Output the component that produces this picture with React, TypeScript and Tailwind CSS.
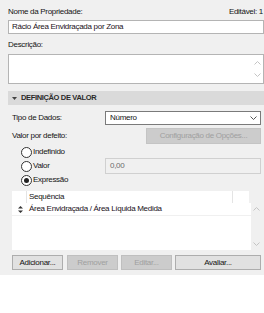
import React from "react";

function Radio({ checked }: { checked?: boolean }) {
  return (
    <div className="w-[11px] h-[11px] rounded-full border border-[#333333] bg-white flex items-center justify-center shrink-0">
      {checked && <div className="w-[5px] h-[5px] rounded-full bg-[#222222]" />}
    </div>
  );
}

function Chevron({ up, color = "#a8a8a8" }: { up?: boolean; color?: string }) {
  return (
    <svg width="7" height="4" viewBox="0 0 7 4">
      <path d={up ? "M0.5 3.5 L3.5 0.5 L6.5 3.5" : "M0.5 0.5 L3.5 3.5 L6.5 0.5"} fill="none" stroke={color} strokeWidth="1" />
    </svg>
  );
}

export default function App() {
  return (
    <div className="w-[264px] h-[313px] bg-white font-['Liberation_Sans',Arial,sans-serif] text-[8px] tracking-[-0.3px] text-[#141414] overflow-hidden">
      <div className="bg-[#f0f0f0] h-[275px] pl-2 pt-[6px] flex flex-col">
        <div className="h-[12px] flex items-center justify-between">
          <span>Nome da Propriedade:</span>
          <span className="pr-[1px]">Editável: 1</span>
        </div>
        <div className="mt-[2px] h-[14px] w-[256px] border border-[#b4b4b4] bg-white flex items-center pl-[3px] text-[#1a1020]">
          Rácio Área Envidraçada por Zona
        </div>
        <div className="mt-[5px] h-[12px] flex items-center">Descrição:</div>
        <div className="mt-[3px] h-[30px] w-[256px] border border-[#b4b4b4] bg-white flex justify-end">
          <div className="w-[11px] flex flex-col items-center justify-between py-[6px]">
            <Chevron up color="#c4c4c4" />
            <Chevron color="#c4c4c4" />
          </div>
        </div>

        <div className="mt-[7px] h-[14px] w-[256px] bg-[#dadada] flex items-center pl-[4px]">
          <svg width="5" height="3" viewBox="0 0 5 3" className="mr-[4px]">
            <path d="M0 0 L5 0 L2.5 3 Z" fill="#444444" />
          </svg>
          <span className="font-bold text-[7.5px] tracking-[-0.35px] text-[#2a2a2a]">DEFINIÇÃO DE VALOR</span>
        </div>

        <div className="mt-[6px] h-[14px] flex items-center">
          <span className="w-[97px] pl-[4px]">Tipo de Dados:</span>
          <div className="w-[156px] h-[14px] border border-[#7a7a7a] bg-white flex items-center justify-between pl-[4px] pr-[3px]">
            <span>Número</span>
            <Chevron color="#555555" />
          </div>
        </div>

        <div className="mt-[3px] h-[16px] flex items-center">
          <span className="w-[138px] pl-[4px]">Valor por defeito:</span>
          <div className="w-[115px] h-[16px] border border-[#c4c4c4] bg-[#cccccc] flex items-center justify-center text-[#a0a0a0]">
            Configuração de Opções...
          </div>
        </div>

        <div className="mt-[2px] h-[12px] flex items-center pl-[13px] gap-[1px]">
          <Radio />
          <span>Indefinido</span>
        </div>
        <div className="h-[16px] flex items-center">
          <div className="w-[97px] flex items-center pl-[13px] gap-[1px]">
            <Radio />
            <span>Valor</span>
          </div>
          <div className="w-[156px] h-[16px] border border-[#d0d0d0] bg-[#f0f0f0] flex items-center pl-[4px] text-[#6d6d6d]">
            0,00
          </div>
        </div>
        <div className="h-[12px] flex items-center pl-[13px] gap-[1px]">
          <Radio checked />
          <span>Expressão</span>
        </div>

        <div className="mt-[5px] ml-[4px] w-[249px] flex flex-col">
          <div className="h-[12px] flex">
            <div className="w-[237px] bg-white flex">
              <div className="w-[15px] border-r border-[#e4e4e4]" />
              <div className="flex-1 flex items-center pl-[2px] border-r border-[#e4e4e4]">Sequência</div>
              <div className="w-[16px]" />
            </div>
          </div>
          <div className="h-[47px] flex">
            <div className="w-[239px] bg-white flex flex-col">
              <div className="h-[13px] flex items-center border-b border-[#f0f0f0]">
                <div className="w-[17px] flex justify-center">
                  <svg width="5" height="7" viewBox="0 0 5 7">
                    <path d="M0 2.5 L2.5 0 L5 2.5 Z" fill="#333333" />
                    <path d="M0 4.5 L2.5 7 L5 4.5 Z" fill="#333333" />
                  </svg>
                </div>
                <span className="text-[#1a1020]">Área Envidraçada / Área Líquida Medida</span>
              </div>
            </div>
            <div className="flex-1 flex flex-col items-center justify-between py-[4px]">
              <Chevron up color="#c4c4c4" />
              <Chevron color="#c4c4c4" />
            </div>
          </div>
        </div>

        <div className="mt-[5px] ml-[4px] h-[15px] flex">
          <div className="w-[51px] h-[15px] border border-[#adadad] bg-[#e1e1e1] flex items-center justify-center">Adicionar...</div>
          <div className="ml-[4px] w-[51px] h-[15px] border border-[#bfbfbf] bg-[#cccccc] flex items-center justify-center text-[#a0a0a0]">Remover</div>
          <div className="ml-[3px] w-[51px] h-[15px] border border-[#bfbfbf] bg-[#cccccc] flex items-center justify-center text-[#a0a0a0]">Editar...</div>
          <div className="ml-[3px] w-[86px] h-[15px] border border-[#adadad] bg-[#e1e1e1] flex items-center justify-center">Avaliar...</div>
        </div>
      </div>
    </div>
  );
}
